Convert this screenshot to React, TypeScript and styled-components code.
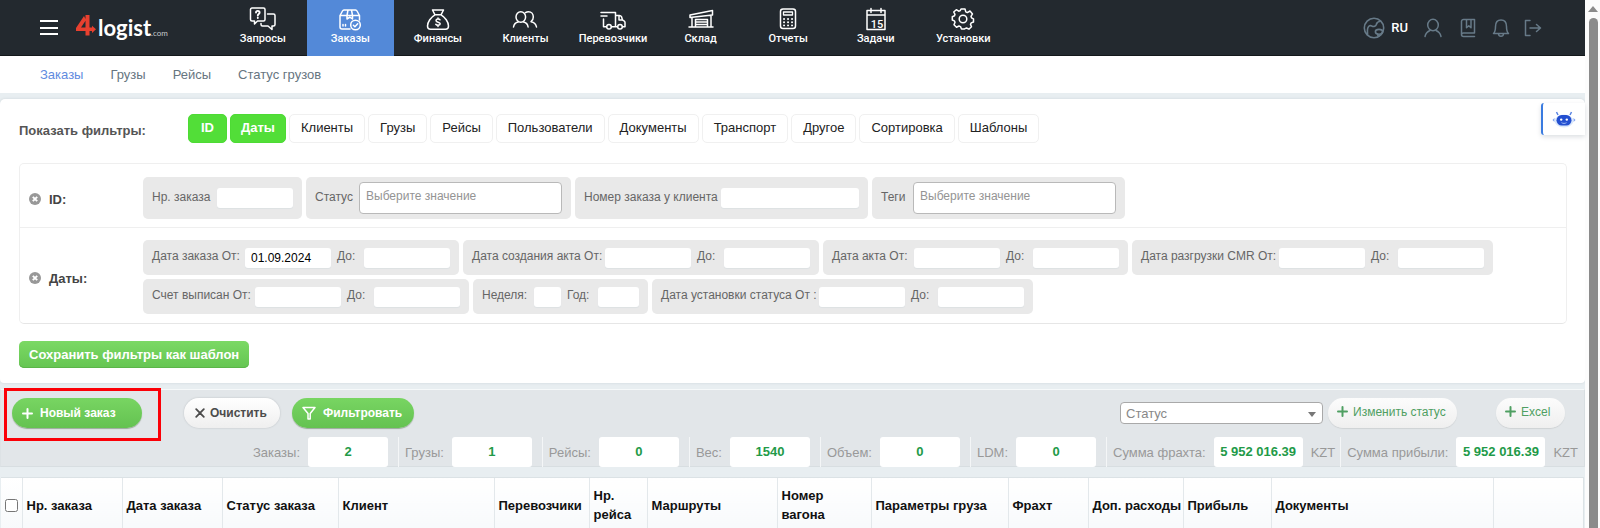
import React from "react";
import styled, { createGlobalStyle, css } from "styled-components";

const GlobalStyle = createGlobalStyle`
  *, *::before, *::after { box-sizing: border-box; }
  html, body, #root { height: 100%; }
  body {
    margin: 0;
    overflow: hidden;
    background: #e8eef1;
    font-family: "Liberation Sans", Arial, sans-serif;
    font-size: 13px;
    color: #333;
  }
  button, input, select { font-family: inherit; margin: 0; }
`;

/* ---------- shell ---------- */

const Shell = styled.div`
  display: grid;
  grid-template-columns: minmax(0, 1fr) 15px;
  height: 100%;
`;

const Page = styled.div`
  overflow: hidden;
  min-width: 0;
`;

const ScrollTrack = styled.div`
  display: flex;
  flex-direction: column;
  align-items: center;
  gap: 6px;
  padding: 6px 0 0 1px;
  background: #fcfcfc;
`;

const ScrollArrow = styled.span`
  border: 5px solid transparent;
  border-top-width: 0;
  border-bottom: 6px solid #8b8b8b;
`;

const ScrollThumb = styled.span`
  flex: 1;
  width: 9px;
  border-radius: 5px 5px 0 0;
  background: #8b8b8b;
`;

/* ---------- top bar ---------- */

const TopBar = styled.header`
  display: flex;
  align-items: stretch;
  height: 56px;
  background: #23292f;
  border-bottom: 1px solid #14181b;
`;

const Brand = styled.div`
  display: flex;
  align-items: center;
  flex: 0 0 219px;
  padding-left: 40px;
  gap: 18px;
`;

const MenuButton = styled.button`
  display: flex;
  flex-direction: column;
  justify-content: space-between;
  width: 18px;
  height: 15px;
  padding: 0;
  border: 0;
  background: none;
  span { height: 2px; background: #fff; }
`;

const Logo = styled.a`
  display: flex;
  align-items: baseline;
  padding-top: 6px;
  color: #fff;
  text-decoration: none;
  font: 700 22px/28px Lato, sans-serif;
  svg { margin-right: 2px; }
  small { font: 400 8px/28px Lato, sans-serif; color: #c6c9cb; }
`;

const MainNav = styled.nav`
  display: flex;
  flex: 0 1 788px;
`;

const NavItem = styled.a<{ $active?: boolean }>`
  display: flex;
  flex: 1 1 0;
  flex-direction: column;
  align-items: center;
  padding-top: 5px;
  height: 56px;
  color: #fff;
  text-decoration: none;
  font: 500 11px/12px Roboto, sans-serif;
  background: ${(p) => (p.$active ? "#5389d8" : "transparent")};
`;

const UserTools = styled.div`
  display: flex;
  align-items: center;
  margin-left: auto;
  padding-right: 43px;
`;

const ToolButton = styled.button<{ $gap?: number }>`
  display: flex;
  align-items: center;
  gap: 6px;
  padding: 0;
  margin-left: ${(p) => p.$gap ?? 16}px;
  border: 0;
  background: none;
  color: #677a88;
  strong { color: #fff; font: 500 13px/16px Roboto, sans-serif; }
`;

const SubNav = styled.nav`
  display: flex;
  gap: 27px;
  height: 37px;
  padding-left: 40px;
  background: #fff;
`;

const SubLink = styled.a<{ $active?: boolean }>`
  color: ${(p) => (p.$active ? "#5f8be0" : "#66757f")};
  text-decoration: none;
  line-height: 37px;
`;

/* ---------- filters ---------- */

const FilterPanel = styled.section`
  margin-top: 6px;
  padding: 15px 18px 15px 19px;
  background: #fff;
  border-radius: 5px 5px 4px 4px;
  box-shadow: 0 0 3px #cdd5d9;
`;

const FilterTabs = styled.div`
  display: flex;
  align-items: center;
  gap: 3px;
`;

const FilterTitle = styled.span`
  flex: 0 0 166px;
  padding-top: 4px;
  font-weight: 700;
  color: #555;
`;

const FilterTab = styled.button<{ $on?: boolean }>`
  min-width: 39px;
  height: 29px;
  padding: 0 11px 2px;
  border: 1px solid #f0f0f0;
  border-radius: 5px;
  background: #fff;
  color: #222;
  font-size: 13px;
  ${(p) =>
    p.$on &&
    css`
      padding: 0 10px 2px;
      border-color: #4ddb34;
      background: #52de38;
      color: #fff;
      font-weight: 700;
    `}
`;

const BotButton = styled.button`
  position: absolute;
  top: 103px;
  right: 15px;
  display: flex;
  align-items: center;
  justify-content: center;
  width: 44px;
  height: 32px;
  padding: 0;
  border: 0;
  border-left: 2px solid #3a7be0;
  border-radius: 3px 0 0 3px;
  background: #fff;
  box-shadow: 0 2px 5px #dcdfe2;
`;

const FilterBox = styled.div`
  margin-top: 20px;
  border: 1px solid #efefef;
  border-bottom-color: #e6e6e6;
  border-radius: 5px;
`;

const FilterRow = styled.div`
  display: flex;
  padding: 13px 9px 8px;
  & + & { border-top: 1px solid #efefef; padding: 12px 9px 9px; }
`;

const RowTitle = styled.div`
  display: flex;
  align-items: center;
  flex: 0 0 114px;
  gap: 8px;
  padding-top: 2px;
  font-weight: 700;
  color: #444;
`;

const RemoveButton = styled.button`
  display: flex;
  padding: 0;
  border: 0;
  background: none;
`;

const Groups = styled.div`
  display: flex;
  flex-wrap: wrap;
  gap: 4px;
`;

const Group = styled.div<{ $tall?: boolean }>`
  display: flex;
  align-items: center;
  height: ${(p) => (p.$tall ? 42 : 35)}px;
  padding: 0 9px;
  border-radius: 5px;
  background: #e9e9e9;
`;

const Field = styled.label<{ $label: number }>`
  display: flex;
  align-items: center;
  font-size: 12px;
  line-height: 16px;
  color: #666;
  & + & { margin-left: 6px; }
  span {
    width: ${(p) => p.$label}px;
    padding-bottom: 3px;
    white-space: nowrap;
  }
`;

const TextBox = styled.input<{ $w: number }>`
  width: ${(p) => p.$w}px;
  height: 20px;
  padding: 0 6px;
  border: 0;
  border-radius: 3px;
  background: #fff;
  box-shadow: 0 1px 1px #dde1e3;
  color: #000;
  font-size: 12px;
`;

const MultiBox = styled.input`
  width: 203px;
  height: 32px;
  padding: 0 6px 5px;
  border: 1px solid #b9b9b9;
  border-radius: 4px;
  background: #fff;
  font-size: 12px;
  &::placeholder { color: #949494; opacity: 1; }
`;

const SaveButton = styled.button`
  display: block;
  height: 27px;
  margin-top: 17px;
  padding: 0 10px;
  border: 0;
  border-radius: 5px;
  background: linear-gradient(#7bd964, #65c552);
  box-shadow: inset 0 -1px 0 #5bb549;
  color: #fff;
  font-size: 13px;
  font-weight: 700;
`;

/* ---------- action bar ---------- */

const ActionBar = styled.section`
  margin-top: 6px;
  height: 78px;
  padding-top: 8px;
  border: 1px solid #d8dee1;
  border-top-color: #f6f9fa;
  border-left-color: #dde2e5;
  background: #e2e6e9;
`;

const Actions = styled.div`
  display: flex;
  align-items: center;
  gap: 12px;
  height: 30px;
  padding: 0 19px 0 11px;
`;

const Highlight = styled.div`
  position: relative;
  margin-right: 30px;
  &::after {
    content: "";
    position: absolute;
    inset: -10px -19px -13px -8px;
    border: 3px solid #fb0007;
    pointer-events: none;
  }
`;

const Pill = styled.button<{ $kind: "green" | "light" | "soft"; $w: number }>`
  display: flex;
  align-items: center;
  gap: 7px;
  width: ${(p) => p.$w}px;
  height: 30px;
  padding: 0 0 0 10px;
  border: 0;
  border-radius: 15px;
  font-size: 12px;
  font-weight: 700;
  white-space: nowrap;
  ${(p) =>
    p.$kind === "green" &&
    css`
      background: linear-gradient(#78d562, #64c251);
      box-shadow: 0 1px 1px #9aa99a;
      color: #fff;
    `}
  ${(p) =>
    p.$kind === "light" &&
    css`
      gap: 5px;
      padding-left: 11px;
      background: linear-gradient(#ffffff, #efefef);
      box-shadow: 0 0 2px #b5b9bc;
      color: #4c4c4c;
    `}
  ${(p) =>
    p.$kind === "soft" &&
    css`
      padding: 0 0 3px 9px;
      gap: 5px;
      background: linear-gradient(#fcfcfc, #efefef);
      box-shadow: 0 1px 1px #cfd2d4;
      color: #4f9f62;
      font-weight: 400;
    `}
`;

const StatusTools = styled.div`
  display: flex;
  align-items: center;
  gap: 5px;
  margin-left: auto;
  margin-right: 27px;
`;

const StatusSelect = styled.div`
  position: relative;
  select {
    display: block;
    appearance: none;
    width: 203px;
    height: 22px;
    padding: 0 5px;
    border: 1px solid #a9a9a9;
    border-radius: 4px;
    background: #fff;
    color: #888;
    font-size: 13px;
  }
  &::after {
    content: "";
    position: absolute;
    right: 7px;
    top: 10px;
    border: 4px solid transparent;
    border-top: 5px solid #777;
    border-bottom: 0;
    pointer-events: none;
  }
`;

const Totals = styled.div`
  display: flex;
  justify-content: flex-end;
  margin-top: 9px;
  padding-right: 6px;
`;

const Total = styled.div<{ $unit?: boolean }>`
  display: flex;
  align-items: center;
  height: 30px;
  padding-right: ${(p) => (p.$unit ? 5 : 10)}px;
  font-size: 13px;
  color: #999;
  & + & {
    padding-left: 6px;
    border-left: 1px solid #f4f6f7;
  }
  &:last-child { padding-right: 0; }
`;

const TotalValue = styled.output<{ $w: number }>`
  width: ${(p) => p.$w}px;
  margin-left: 8px;
  border-radius: 3px;
  background: #fff;
  color: #229a48;
  font-size: 13px;
  font-weight: 700;
  line-height: 30px;
  text-align: center;
`;

const Currency = styled.span`
  margin-left: 8px;
`;

/* ---------- orders table ---------- */

const TableWrap = styled.div`
  margin: 10px 1px 0 1px;
  border: 1px solid #dbe2e5;
  border-width: 1px 1px 0 0;
`;

const OrdersTable = styled.table`
  width: 100%;
  table-layout: fixed;
  border-collapse: collapse;
  th {
    height: 54px;
    padding: 0 0 0 4px;
    border-right: 1px solid #e3e8eb;
    background: linear-gradient(#ffffff, #f7f9fb);
    color: #111;
    font-size: 13px;
    line-height: 19px;
    text-align: left;
    vertical-align: middle;
    white-space: pre;
  }
  th:last-child { border-right: 0; }
  input { display: block; width: 13px; height: 13px; }
`;

/* ---------- icons ---------- */

const Icon = ({ w = 28, h = 28, children, sw = 1.5 }: { w?: number; h?: number; sw?: number; children: React.ReactNode }) => (
  <svg width={w} height={h} viewBox={`0 0 ${w} ${h}`} fill="none" stroke="currentColor" strokeWidth={sw} strokeLinecap="round" strokeLinejoin="round" aria-hidden="true">
    {children}
  </svg>
);

const RequestsIcon = () => (
  <Icon>
    <path d="M3 3h11.500a1.500 1.500 0 0 1 1.500 1.500v10a1.500 1.500 0 0 1-1.500 1.500h-6L5.500 19v-3H3a1.500 1.500 0 0 1-1.500-1.500v-10A1.500 1.500 0 0 1 3 3z" />
    <path d="M18.500 9h6a1.500 1.500 0 0 1 1.500 1.500v9a1.500 1.500 0 0 1-1.500 1.500h-1.500v3.500L19 21h-5.500a1.500 1.500 0 0 1-1.500-1.500v-1" />
    <path d="M7 7.500c0-2.200 3.600-2.200 3.600 0 0 1.500-1.800 1.300-1.800 3M8.800 12.800v.2" strokeWidth="1.900" />
  </Icon>
);
const OrdersIcon = () => (
  <Icon>
    <path d="M14 24H6a2 2 0 0 1-2-2V10.500L6.500 6a2 2 0 0 1 1.500-1h11.500a2 2 0 0 1 1.500 1l2.500 4.500V15M4 10.500h19.500M12 5l-1 5.500V14l2.800-1.800 2.700 1.800v-3.500L15.500 5M7 19.500v1.500M9.500 19.500v1.500" />
    <circle cx="19.500" cy="20" r="4.800" />
    <path d="M17.400 20.200l1.500 1.500 2.800-3" />
  </Icon>
);
const FinanceIcon = () => (
  <Icon>
    <path d="M8.500 5h11l-2.500 4.800h-6zM11 9.800C7 12 3.500 17 3.500 21c0 2.300 1 3.300 3 3.300h15c2 0 3-1 3-3.300 0-4-3.500-9-7.500-11.200" />
    <path d="M16 14.800c-.8-1.200-4-1-4 .8 0 2.100 4.200 1 4.200 3.100 0 1.900-3.500 1.900-4.400.6M14 12.900v1.200M14 20v1.400" />
  </Icon>
);
const ClientsIcon = () => (
  <Icon>
    <ellipse cx="9.800" cy="12" rx="4.800" ry="5.300" />
    <path d="M2.500 22c.5-3 2.200-4.600 4.600-5M12.500 17c2.500.5 4.200 2 4.600 5M14.500 7.600c1-.7 2-.9 3-.9 3 0 4.800 2.300 4.800 5.200 0 2.100-.9 3.900-2.300 4.800 3 .5 5 2.300 5.500 5.300" />
  </Icon>
);
const CarriersIcon = () => (
  <Icon>
    <path d="M2 7.500h14.500v14.200M2 11h6M4.500 14v7.700h3M12.500 21.700h6M16.500 10.500h4c1 0 1.500.4 2 1.200l1 3.300 1.500.8c.7.400 1 .9 1 1.700v4.200h-2.500M20 11v4h3.500" />
    <circle cx="10" cy="21.700" r="2.300" />
    <circle cx="21" cy="21.700" r="2.300" />
  </Icon>
);
const WarehouseIcon = () => (
  <Icon>
    <path d="M3 10L25.500 5.500v4.500L3 12.500zM5 12.500v9.500M24 10V22M2 22h24M8.500 22v-7.500h12V22M8.500 17h12M8.500 19.500h12" />
  </Icon>
);
const ReportsIcon = () => (
  <Icon>
    <rect x="6.500" y="4" width="15" height="19.500" rx="2.500" />
    <path d="M9.500 7h9v3h-9z" strokeWidth="1.300" />
    <path d="M10 14h.1M14 14h.1M18 14h.1M10 17.200h.1M14 17.200h.1M18 17.200h.1M10 20.400h.1M14 20.400h.1M18 20.400h.1" strokeWidth="1.900" />
  </Icon>
);
const TasksIcon = () => (
  <Icon>
    <path d="M5 5.500h18v19H5zM5 10h18M9 3.500v4M19 3.500v4" />
    <text x="15" y="22.500" textAnchor="middle" fontFamily="Roboto, sans-serif" fontSize="11" fontWeight="500" fill="currentColor" stroke="none">15</text>
  </Icon>
);
const SettingsIcon = () => (
  <Icon>
    <circle cx="14" cy="14" r="3.800" />
    <path d="M12 4h4l.8 2.900 1.500.7L21 6l2.500 2.900-1.500 2.400.5 1.500 2 1v3.200l-2.300.9-.7 1.500 1 2.400-2.600 2.400-2.400-1.200-1.500.6L15.500 24h-3l-1-2.400-1.500-.6-2.500 1.200L5 19.800l1-2.500-.6-1.400-2.100-.9v-3.200l2.200-1 .5-1.500L4.700 7 7.300 4.700l2.400 1.500 1.500-.6z" />
  </Icon>
);

const GlobeIcon = () => (
  <Icon w={22} h={22} sw={1.6}>
    <circle cx="11" cy="11" r="9.700" />
    <path d="M4.500 17.500c.2-2.500-.5-4 .3-6.500 1-2.500 2.500-2.800 4-2 2 1 4 .3 4.500-1.500.5-2.300 2-3 4-3.200" />
    <ellipse cx="16" cy="14.800" rx="3.600" ry="2.400" />
    <path d="M14.500 17c0 1 .5 2 1.500 2.200" />
  </Icon>
);
const UserIcon = () => (
  <Icon w={18} h={20}>
    <ellipse cx="9" cy="7" rx="5.300" ry="5.800" />
    <path d="M1 18.500c.7-3 2.500-5 5-6M17 18.500c-.7-3-2.500-5-5-6" />
  </Icon>
);
const BookIcon = () => (
  <Icon w={16} h={20}>
    <path d="M14.500 15V1.500H3.500a2 2 0 0 0-2 2v13a2 2 0 0 0 2 2h11M14.500 15h-11a2 2 0 0 0-2 1.700M6.500 1.500v8.300l2.300-2 2.200 2V1.500" />
  </Icon>
);
const BellIcon = () => (
  <Icon w={18} h={20}>
    <path d="M1.500 15.500c1.500-1.500 2-3.500 2-7 0-4 2-6.500 5.500-6.500s5.500 2.500 5.500 6.500c0 3.500.5 5.500 2 7zM6.500 16c.3 3 4.700 3 5 0" />
  </Icon>
);
const LogoutIcon = () => (
  <Icon w={18} h={20}>
    <path d="M6 2.500H1.500v15H6M6 10h10.500M12.500 6.500L16.500 10l-4 3.500" />
  </Icon>
);
const BotIcon = () => (
  <svg width="24" height="18" viewBox="0 0 24 18" aria-hidden="true">
    <path d="M4.500 2l1.500 3M19.500 2L18 5" stroke="#5b86e4" strokeWidth="1.500" />
    <path d="M2.500 8v4l-2-2zM21.500 8v4l2-2z" fill="#7e9feb" />
    <ellipse cx="12" cy="11" rx="9.500" ry="6.500" fill="#dbe8fb" />
    <rect x="4.500" y="5" width="15" height="10.500" rx="5.200" fill="#234fd0" />
    <circle cx="9.200" cy="9.600" r="1.200" fill="#fff" />
    <circle cx="14.800" cy="9.600" r="1.200" fill="#fff" />
    <path d="M9.500 12.700c1.500.9 3.500.9 5 0" stroke="#9db8f5" fill="none" />
  </svg>
);
const LogoMark = () => (
  <svg width="20" height="22" viewBox="0 0 20 22" aria-hidden="true">
    <path d="M8 2L0 14v3h9.500v4.500h4V17H16v2l4-3.700-4-3.600v1.900h-2.500V1H9.500v12.600H5L10 6z" fill="#e8402f" />
  </svg>
);
const CrossIcon = () => (
  <svg width="12" height="12" viewBox="0 0 12 12" aria-hidden="true">
    <circle cx="6" cy="6" r="6" fill="#989898" />
    <path d="M3.800 3.800l4.400 4.400M8.200 3.800L3.800 8.200" stroke="#fff" strokeWidth="1.900" />
  </svg>
);
const PlusIcon = () => (
  <Icon w={11} h={11} sw={2}>
    <path d="M5.500 1v9M1 5.500h9" />
  </Icon>
);
const ClearIcon = () => (
  <Icon w={10} h={10} sw={1.8}>
    <path d="M1.200 1.200l7.600 7.600M8.800 1.200l-7.600 7.600" />
  </Icon>
);
const FunnelIcon = () => (
  <Icon w={14} h={14} sw={1.5}>
    <path d="M1 1.500h12L8.200 7.500V13H6V7.500z" />
  </Icon>
);

/* ---------- data ---------- */

const navItems: [string, React.FC][] = [
  ["Запросы", RequestsIcon],
  ["Заказы", OrdersIcon],
  ["Финансы", FinanceIcon],
  ["Клиенты", ClientsIcon],
  ["Перевозчики", CarriersIcon],
  ["Склад", WarehouseIcon],
  ["Отчеты", ReportsIcon],
  ["Задачи", TasksIcon],
  ["Установки", SettingsIcon],
];

const filterTabs = ["ID", "Даты", "Клиенты", "Грузы", "Рейсы", "Пользователи", "Документы", "Транспорт", "Другое", "Сортировка", "Шаблоны"];

type FieldDef = { label: string; labelW: number; w?: number; value?: string; multi?: boolean };

const until: FieldDef = { label: "До:", labelW: 27 };

const idGroups: FieldDef[][] = [
  [{ label: "Нр. заказа", labelW: 65, w: 76 }],
  [{ label: "Статус", labelW: 44, multi: true }],
  [{ label: "Номер заказа у клиента", labelW: 137, w: 138 }],
  [{ label: "Теги", labelW: 32, multi: true }],
];

const dateGroups: FieldDef[][] = [
  [{ label: "Дата заказа От:", labelW: 93, value: "01.09.2024" }, until],
  [{ label: "Дата создания акта От:", labelW: 133 }, until],
  [{ label: "Дата акта От:", labelW: 82 }, until],
  [{ label: "Дата разгрузки CMR От:", labelW: 138 }, until],
  [{ label: "Счет выписан От:", labelW: 103 }, until],
  [{ label: "Неделя:", labelW: 52, w: 27 }, { label: "Год:", labelW: 31, w: 41 }],
  [{ label: "Дата установки статуса От :", labelW: 158 }, until],
];

const FilterGroups = ({ groups, tall }: { groups: FieldDef[][]; tall?: boolean }) => (
  <Groups>
    {groups.map((group) => (
      <Group key={group[0].label} $tall={tall}>
        {group.map((f) => (
          <Field key={f.label} $label={f.labelW}>
            <span>{f.label}</span>
            {f.multi ? <MultiBox placeholder="Выберите значение" /> : <TextBox $w={f.w ?? 86} defaultValue={f.value} />}
          </Field>
        ))}
      </Group>
    ))}
  </Groups>
);

const totals = [
  { label: "Заказы:", value: "2" },
  { label: "Грузы:", value: "1" },
  { label: "Рейсы:", value: "0" },
  { label: "Вес:", value: "1540" },
  { label: "Объем:", value: "0" },
  { label: "LDM:", value: "0" },
  { label: "Сумма фрахта:", value: "5 952 016.39", unit: "KZT" },
  { label: "Сумма прибыли:", value: "5 952 016.39", unit: "KZT" },
];

const columns: { title: string; w?: number }[] = [
  { title: "Нр. заказа", w: 100 },
  { title: "Дата заказа", w: 100 },
  { title: "Статус заказа", w: 116 },
  { title: "Клиент", w: 156 },
  { title: "Перевозчики", w: 95 },
  { title: "Нр.\nрейса", w: 58 },
  { title: "Маршруты", w: 130 },
  { title: "Номер\nвагона", w: 94 },
  { title: "Параметры груза", w: 137 },
  { title: "Фрахт", w: 80 },
  { title: "Доп. расходы", w: 95 },
  { title: "Прибыль", w: 88 },
  { title: "Документы" },
  { title: "", w: 90 },
];

export default function App() {
  return (
    <>
      <GlobalStyle />
      <Shell>
        <Page>
          <TopBar>
            <Brand>
              <MenuButton type="button" aria-label="Меню">
                <span />
                <span />
                <span />
              </MenuButton>
              <Logo href="#">
                <LogoMark />
                logist<small>.com</small>
              </Logo>
            </Brand>
            <MainNav>
              {navItems.map(([label, Glyph]) => (
                <NavItem key={label} href="#" $active={label === "Заказы"}>
                  <Glyph />
                  {label}
                </NavItem>
              ))}
            </MainNav>
            <UserTools>
              <ToolButton type="button"><GlobeIcon /><strong>RU</strong></ToolButton>
              <ToolButton type="button" aria-label="Профиль"><UserIcon /></ToolButton>
              <ToolButton type="button" aria-label="Справка" $gap={18}><BookIcon /></ToolButton>
              <ToolButton type="button" aria-label="Уведомления"><BellIcon /></ToolButton>
              <ToolButton type="button" aria-label="Выход" $gap={14}><LogoutIcon /></ToolButton>
            </UserTools>
          </TopBar>

          <SubNav>
            {["Заказы", "Грузы", "Рейсы", "Статус грузов"].map((t) => (
              <SubLink key={t} href="#" $active={t === "Заказы"}>{t}</SubLink>
            ))}
          </SubNav>

          <FilterPanel>
            <FilterTabs>
              <FilterTitle>Показать фильтры:</FilterTitle>
              {filterTabs.map((t, i) => (
                <FilterTab key={t} type="button" $on={i < 2}>{t}</FilterTab>
              ))}
            </FilterTabs>

            <FilterBox>
              <FilterRow>
                <RowTitle>
                  <RemoveButton type="button" aria-label="Убрать ID"><CrossIcon /></RemoveButton>
                  ID:
                </RowTitle>
                <FilterGroups groups={idGroups} tall />
              </FilterRow>
              <FilterRow>
                <RowTitle>
                  <RemoveButton type="button" aria-label="Убрать даты"><CrossIcon /></RemoveButton>
                  Даты:
                </RowTitle>
                <FilterGroups groups={dateGroups} />
              </FilterRow>
            </FilterBox>

            <SaveButton type="button">Сохранить фильтры как шаблон</SaveButton>
          </FilterPanel>

          <ActionBar>
            <Actions>
              <Highlight>
                <Pill type="button" $kind="green" $w={130}><PlusIcon />Новый заказ</Pill>
              </Highlight>
              <Pill type="button" $kind="light" $w={96}><ClearIcon />Очистить</Pill>
              <Pill type="button" $kind="green" $w={122}><FunnelIcon />Фильтровать</Pill>
              <StatusTools>
                <StatusSelect>
                  <select aria-label="Статус" defaultValue="">
                    <option value="">Статус</option>
                  </select>
                </StatusSelect>
                <Pill type="button" $kind="soft" $w={129}><PlusIcon />Изменить статус</Pill>
              </StatusTools>
              <Pill type="button" $kind="soft" $w={69}><PlusIcon />Excel</Pill>
            </Actions>
            <Totals>
              {totals.map((t) => (
                <Total key={t.label} $unit={Boolean(t.unit)}>
                  {t.label}
                  <TotalValue $w={t.unit ? 89 : 80}>{t.value}</TotalValue>
                  {t.unit && <Currency>{t.unit}</Currency>}
                </Total>
              ))}
            </Totals>
          </ActionBar>

          <TableWrap>
            <OrdersTable>
              <colgroup>
                <col width={21} />
                {columns.map((c, i) => (
                  <col key={i} width={c.w} />
                ))}
              </colgroup>
              <thead>
                <tr>
                  <th><input type="checkbox" aria-label="Выбрать все" /></th>
                  {columns.map((c, i) => (
                    <th key={i} scope="col">{c.title}</th>
                  ))}
                </tr>
              </thead>
            </OrdersTable>
          </TableWrap>
        </Page>
        <ScrollTrack aria-hidden="true">
          <ScrollArrow />
          <ScrollThumb />
        </ScrollTrack>
      </Shell>
      <BotButton type="button" aria-label="Помощник"><BotIcon /></BotButton>
    </>
  );
}
